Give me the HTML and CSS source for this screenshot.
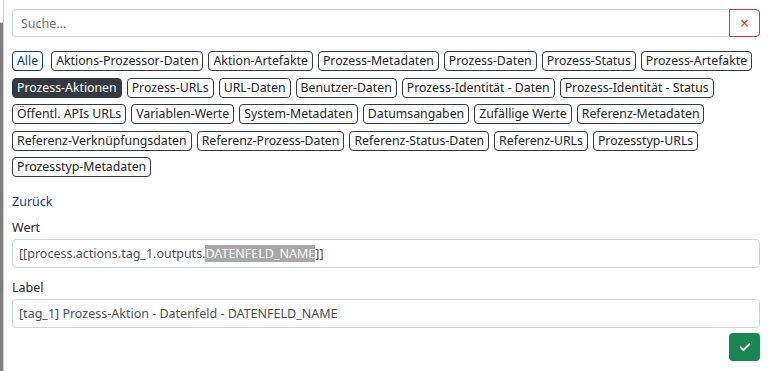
FILE: index.html
```html
<!DOCTYPE html>
<html lang="de">
<head>
    <meta charset="UTF-8">
    <meta name="viewport" content="width=device-width, initial-scale=1.0">
    <title>Platzhalter auswählen</title>
    <link rel="stylesheet" href="styles.css">
</head>
<body>
    <div class="edge"></div>
    <div class="panel">
        <div class="search-group">
            <input type="text" class="search" placeholder="Suche...">
            <button type="button" class="clear" aria-label="Leeren">&times;</button>
        </div>

        <div class="chips">
            <span class="chip chip-all">Alle</span>
            <span class="chip">Aktions-Prozessor-Daten</span>
            <span class="chip">Aktion-Artefakte</span>
            <span class="chip">Prozess-Metadaten</span>
            <span class="chip">Prozess-Daten</span>
            <span class="chip">Prozess-Status</span>
            <span class="chip">Prozess-Artefakte</span>
            <span class="chip active">Prozess-Aktionen</span>
            <span class="chip">Prozess-URLs</span>
            <span class="chip">URL-Daten</span>
            <span class="chip">Benutzer-Daten</span>
            <span class="chip">Prozess-Identität - Daten</span>
            <span class="chip">Prozess-Identität - Status</span>
            <span class="chip">Öffentl. APIs URLs</span>
            <span class="chip">Variablen-Werte</span>
            <span class="chip">System-Metadaten</span>
            <span class="chip">Datumsangaben</span>
            <span class="chip">Zufällige Werte</span>
            <span class="chip">Referenz-Metadaten</span>
            <span class="chip">Referenz-Verknüpfungsdaten</span>
            <span class="chip">Referenz-Prozess-Daten</span>
            <span class="chip">Referenz-Status-Daten</span>
            <span class="chip">Referenz-URLs</span>
            <span class="chip">Prozesstyp-URLs</span>
            <span class="chip">Prozesstyp-Metadaten</span>
        </div>

        <a href="#" class="back">Zurück</a>

        <div class="field">
            <label class="field-label">Wert</label>
            <div class="field-input">[[process.actions.tag_1.outputs.<span class="selected">DATENFELD_NAME</span>]]</div>
        </div>

        <div class="field">
            <label class="field-label">Label</label>
            <div class="field-input">[tag_1] Prozess-Aktion - Datenfeld - DATENFELD_NAME</div>
        </div>

        <div class="actions">
            <button type="button" class="confirm" aria-label="Übernehmen">
                <svg width="12" height="10" viewBox="0 0 12 10">
                    <path d="M1.5 5.2 L4.5 8 L10.5 2" fill="none" stroke="#fff" stroke-width="1.8" stroke-linecap="round" stroke-linejoin="round"/>
                </svg>
            </button>
        </div>
    </div>
</body>
</html>
```

FILE: styles.css
```css
:root {
    --text-color: #212529;
    --input-text: #495057;
    --border-color: #ced4da;
    --chip-border: #343a40;
    --link-color: #0a3a8c;
    --danger: #dc3545;
    --success: #198754;
}

* {
    margin: 0;
    padding: 0;
    box-sizing: border-box;
}

body {
    display: flex;
    height: 371px;
    overflow: hidden;
    font-family: 'Noto Sans', 'Open Sans', sans-serif;
    font-size: 12.5px;
    color: var(--text-color);
    background: #fff;
}

.edge {
    width: 3px;
    flex-shrink: 0;
    background: linear-gradient(#fff 0, #fff 22px, #d8d8d8 22px, #d8d8d8 23px, #7d7d7d 23px);
}

.panel {
    flex: 1;
    border-left: 1px solid #d0d0d0;
    padding: 9px 8px 0 8px;
    display: flex;
    flex-direction: column;
}

.search-group {
    display: flex;
    height: 28px;
}

.search {
    flex: 1;
    border: 1px solid var(--border-color);
    border-right: none;
    border-radius: 4px 0 0 4px;
    padding: 0 8px;
    font-family: inherit;
    font-size: 12.5px;
    color: var(--input-text);
    outline: none;
}

.search::placeholder {
    color: #6c757d;
}

.clear {
    width: 31px;
    border: 1px solid var(--danger);
    border-radius: 0 4px 4px 0;
    background: #fff;
    color: var(--danger);
    font-size: 16px;
    line-height: 1;
    font-family: inherit;
}

.chips {
    display: flex;
    flex-wrap: wrap;
    gap: 6.5px 5px;
    margin-top: 14px;
}

.chip {
    display: inline-block;
    height: 20px;
    line-height: 18px;
    padding: 0 4px;
    border: 1px solid var(--chip-border);
    border-radius: 4px;
    font-size: 12.3px;
    color: var(--text-color);
    white-space: nowrap;
}

.chip-all {
    border-color: var(--link-color);
    color: var(--link-color);
    margin-right: 3px;
}

.chip.active {
    background: var(--chip-border);
    color: #fff;
}

.back {
    display: block;
    margin-top: 15px;
    line-height: 20px;
    color: var(--link-color);
    text-decoration: none;
    align-self: flex-start;
}

.field {
    margin-top: 6px;
}

.field + .field {
    margin-top: 10px;
}

.field-label {
    display: block;
    line-height: 20px;
    margin-bottom: 1px;
}

.field-input {
    height: 29px;
    line-height: 27px;
    border: 1px solid var(--border-color);
    border-radius: 4px;
    padding: 0 6px;
    color: var(--input-text);
    white-space: nowrap;
}

.selected {
    background: #a8a8a8;
    color: #fff;
}

.actions {
    display: flex;
    justify-content: flex-end;
    margin-top: 5px;
}

.confirm {
    width: 31px;
    height: 28px;
    border: none;
    border-radius: 4px;
    background: var(--success);
    display: flex;
    align-items: center;
    justify-content: center;
}
```
